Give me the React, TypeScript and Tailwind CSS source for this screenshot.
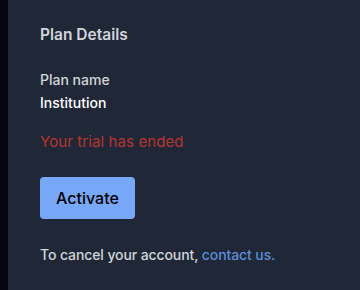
export default function App() {
  return (
    <div className="flex h-[290px] w-[360px] bg-[#202837]" style={{ fontFamily: "Inter, 'Liberation Sans', sans-serif" }}>
      <div className="w-[8px] shrink-0 bg-[#030712]" />
      <div className="flex flex-col pl-[32px] pt-[25px]">
        <h2 className="text-[15.5px] font-semibold leading-[20px] text-[#d1d5db]">Plan Details</h2>
        <div className="mt-[25px] text-[14px] font-medium leading-[20px] text-[#d1d5db]">Plan name</div>
        <div className="mt-[3px] text-[14px] font-medium leading-[20px] text-white">Institution</div>
        <div className="mt-[18px] text-[15px] leading-[22px] tracking-[0.1px] text-[#b83430]">Your trial has ended</div>
        <button className="mt-[24px] h-[42px] w-[95px] rounded-[4px] bg-[#77a8f8] text-[16px] font-medium text-black">Activate</button>
        <p className="mt-[26px] text-[14px] font-medium leading-[20px] tracking-[-0.1px] text-[#d1d5db]">
          To cancel your account, <span className="text-[#5b8ed6]">contact us.</span>
        </p>
      </div>
    </div>
  );
}
